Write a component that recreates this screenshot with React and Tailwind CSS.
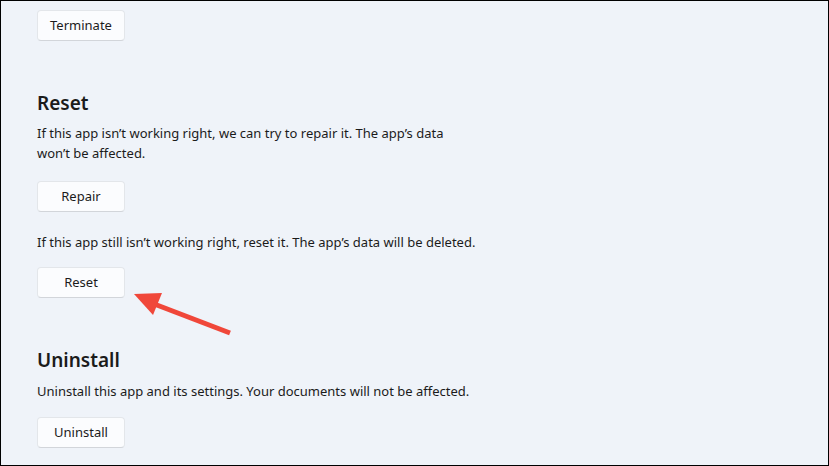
import React from "react";

function Btn({ children }) {
  return (
    <button className="w-[88px] h-[31px] rounded-[4px] bg-[#fbfcfe] border border-[#e3e6ea] border-b-[#d2d5da] text-[13px] text-[#1b1b1b]">
      {children}
    </button>
  );
}

export default function App() {
  return (
    <div
      className="relative w-[829px] h-[466px] border border-black bg-[#eff3f9] overflow-hidden text-[#1b1b1b]"
      style={{ fontFamily: '"Noto Sans", "Open Sans", sans-serif' }}
    >
      <div className="pl-[36px] pt-[9px] flex flex-col items-start">
        <Btn>Terminate</Btn>

        <h2 className="mt-[48px] text-[19px] font-semibold leading-[28px]">Reset</h2>
        <p className="mt-[6px] text-[13px] leading-[20px]">
          If this app isn’t working right, we can try to repair it. The app’s data
          <br />
          won’t be affected.
        </p>
        <div className="mt-[18px]">
          <Btn>Repair</Btn>
        </div>
        <p className="mt-[20px] text-[13px] leading-[20px]">
          If this app still isn’t working right, reset it. The app’s data will be deleted.
        </p>
        <div className="mt-[15px]">
          <Btn>Reset</Btn>
        </div>

        <h2 className="mt-[48px] text-[19px] font-semibold leading-[28px]">Uninstall</h2>
        <p className="mt-[7px] text-[13px] leading-[20px]">
          Uninstall this app and its settings. Your documents will not be affected.
        </p>
        <div className="mt-[16px]">
          <Btn>Uninstall</Btn>
        </div>
      </div>

      <svg className="absolute left-0 top-0" width="829" height="466">
        <line x1="229" y1="332" x2="148" y2="301" stroke="#f0473a" strokeWidth="5" strokeLinecap="butt" />
        <polygon points="133,293 161,292 152,314" fill="#f0473a" />
      </svg>
    </div>
  );
}
